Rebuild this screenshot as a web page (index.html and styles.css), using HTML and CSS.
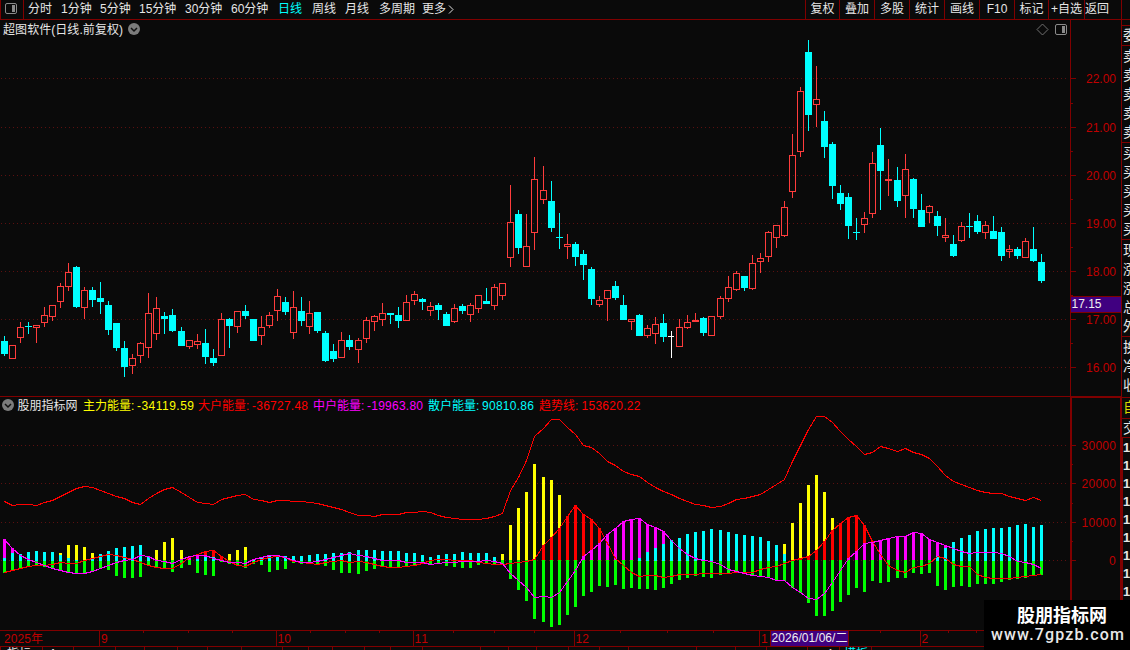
FILE: index.html
```html
<!DOCTYPE html>
<html lang="zh-CN">
<head>
  <meta charset="UTF-8">
  <title>超图软件 日线</title>
  <link rel="stylesheet" href="styles.css">
</head>
<body>
  <div class="terminal">
    <div class="toolbar">
      <div class="layout-btn">
        <svg width="12" height="11" viewBox="0 0 12 11">
          <rect x="0.5" y="0.5" width="11" height="10" rx="1.5" fill="none" stroke="#8a8a8a"/>
          <rect x="7" y="2" width="3" height="7" fill="#8a8a8a"/>
        </svg>
      </div>
      <div class="periods">
        <span>分时</span>
        <span>1分钟</span>
        <span>5分钟</span>
        <span>15分钟</span>
        <span>30分钟</span>
        <span>60分钟</span>
        <span class="active">日线</span>
        <span>周线</span>
        <span>月线</span>
        <span>多周期</span>
        <span class="more">更多
          <svg width="7" height="9" viewBox="0 0 7 9"><path d="M1 0.5L5 4.5L1 8.5" fill="none" stroke="#e0e0e0"/></svg>
        </span>
      </div>
      <div class="tools">
        <span>复权</span>
        <span>叠加</span>
        <span>多股</span>
        <span>统计</span>
        <span>画线</span>
        <span>F10</span>
        <span>标记</span>
        <span class="tight">+自选</span>
        <span>返回</span>
      </div>
    </div>

    <div class="main">
      <div class="charts">
        <svg id="price" class="panel" width="1121" height="376" viewBox="0 20 1121 376"></svg>
        <svg id="energy" class="panel" width="1121" height="234" viewBox="0 396 1121 234"></svg>
        <svg id="dates" class="panel" width="1121" height="20" viewBox="0 630 1121 20"></svg>
      </div>
      <div class="side">
        <div class="group head"><b>委</b></div>
        <div class="group quotes"><b>卖</b><b>卖</b><b>卖</b><b>卖</b><b>卖</b></div>
        <div class="group quotes"><b>买</b><b>买</b><b>买</b><b>买</b><b>买</b></div>
        <div class="group quotes"><b>现</b><b>涨</b><b>涨</b><b>总</b><b>外</b></div>
        <div class="group stats"><b>换</b><b>净</b><b>收</b></div>
        <div class="group own"><b>自</b></div>
        <div class="group deal"><b>交</b></div>
        <div class="ticks"><i>1</i><i>1</i><i>1</i><i>1</i><i>1</i><i>1</i><i>1</i><i>1</i><i>1</i></div>
      </div>
    </div>

    <div class="brand">
      <strong>股朋指标网</strong>
      <svg width="146" height="22"><text x="7" y="15" textLength="133">www.7gpzb.com</text></svg>
    </div>
  </div>
  <script src="chart.js"></script>
</body>
</html>
```

FILE: styles.css
```css
* {
  margin: 0;
  padding: 0;
  box-sizing: border-box;
}

body {
  width: 1130px;
  height: 650px;
  overflow: hidden;
  background: #0a0a0a;
  color: #e6e6e6;
  font: 12px/18px "Liberation Sans", "Noto Sans CJK SC", sans-serif;
}

.terminal {
  position: relative;
  width: 1130px;
  height: 650px;
  overflow: hidden;
  display: flex;
  flex-direction: column;
}

.toolbar {
  height: 20px;
  display: flex;
  border-bottom: 1px solid #800000;
  white-space: nowrap;
}

.layout-btn {
  width: 24px;
  border-left: 1px solid #800000;
  border-right: 1px solid #800000;
  padding: 3px 0 0 4px;
}

.layout-btn svg {
  display: block;
}

.periods {
  width: 781px;
  padding-left: 4px;
  display: grid;
  grid-template-columns: 33px 39px 39px 46px 46px 47px 34px 33px 34px 43px 40px;
}

.periods .active {
  color: #00ffff;
}

.more svg {
  vertical-align: -1px;
  margin-left: -1px;
}

.tools {
  flex: 1;
  display: grid;
  grid-template-columns: 34px 35px 35px 35px 35px 35px 34px 36px 37px 9px;
  text-align: center;
}

.tools span {
  border-left: 1px solid #800000;
}

.tools span:last-child {
  border-right: 1px solid #800000;
  padding-right: 12px;
  width: 38px;
  padding-left: 0;
}

.main {
  flex: 1;
  display: flex;
}

.charts {
  width: 1121px;
  display: flex;
  flex-direction: column;
}

.panel {
  display: block;
  shape-rendering: crispEdges;
}

.panel text {
  font-size: 12px;
}

.axis-label {
  fill: #c00000;
}

.grid-line {
  stroke: #5c1010;
  stroke-dasharray: 1 3;
}

.frame {
  fill: #800000;
}

.smooth {
  shape-rendering: auto;
}

/* narrow strip of the quote window, cut off by the window edge */
.side {
  width: 9px;
  padding-top: 5px;
  overflow: hidden;
  border-left: 1px solid #800000;
}

.group {
  border-top: 1px solid #800000;
  overflow: hidden;
  padding-left: 1px;
}

.group b {
  display: block;
  width: 14px;
  font-weight: 400;
  font-size: 14px;
  height: 19px;
  line-height: 19px;
}

.head {
  height: 20px;
}

.quotes {
  height: 97px;
  padding-top: 1px;
}

.stats {
  height: 61px;
  padding-top: 1px;
}

.own {
  height: 21px;
}

.own b {
  color: #d8d800;
}

.deal {
  height: 20px;
  border-bottom: 1px solid #800000;
}

.ticks {
  border-left: 1px solid #800000;
}

.ticks i {
  display: block;
  height: 18px;
  font: 700 13px/20px "Liberation Sans", sans-serif;
}

.brand {
  position: absolute;
  left: 984px;
  top: 600px;
  width: 146px;
  height: 50px;
  background: #000;
  color: #fff;
}

.brand strong {
  display: block;
  height: 25px;
  padding: 3px 0 0 33px;
  font: 700 18px/22px "Noto Sans CJK SC", sans-serif;
}

.brand svg {
  display: block;
}

.brand text {
  font: 500 16px Roboto, sans-serif;
  fill: #e8e8e8;
}
```

FILE: chart.js
```js
const UP = '#ff3c3c', DOWN = '#00ffff', FLAT = '#ffffff';

// [type, high, body top, body bottom, low]
const candles = [
  ['c',336,341,354,356],['r',345,345,359,359],['r',322,327,338,343],['c',322,326,327,334],['r',325,325,328,343],
  ['r',307,315,323,327],['r',305,305,317,321],['r',283,286,302,308],['r',263,272,287,291],['c',266,267,307,308],
  ['r',287,290,308,319],['c',287,290,300,307],['c',282,298,302,314],['c',301,305,330,335],['c',323,323,348,351],
  ['c',341,348,367,377],['r',354,358,366,374],['r',342,343,356,363],['r',293,313,348,358],['r',297,308,334,340],
  ['c',312,316,319,334],['c',309,315,331,332],['c',327,331,346,346],['r',340,340,347,349],['r',334,341,345,349],
  ['c',329,343,357,364],['c',349,358,363,366],['r',313,319,356,356],['c',318,319,326,348],['r',311,311,327,333],
  ['c',305,311,316,319],['c',319,319,341,341],['r',316,327,336,345],['r',312,315,326,328],['r',289,296,311,321],
  ['c',297,302,312,315],['r',291,307,333,339],['c',297,311,321,326],['r',301,313,327,334],['c',312,312,331,333],
  ['c',331,333,361,362],['c',344,351,359,362],['r',332,340,358,358],['c',335,340,347,350],['r',338,340,350,363],
  ['r',317,320,339,343],['r',315,316,322,331],['r',303,313,320,326],['c',313,313,315,324],['c',307,315,321,328],
  ['r',295,302,321,321],['r',291,294,301,305],['c',298,299,302,310],['r',302,306,311,316],['c',303,305,310,320],
  ['c',312,314,326,326],['r',304,308,322,323],['c',304,306,311,314],['r',303,305,315,322],['r',295,295,309,313],
  ['c',288,301,304,304],['r',284,287,306,310],['r',283,283,296,300],['r',185,222,258,267],['c',210,214,248,254],
  ['r',214,246,267,267],['r',157,179,233,250],['r',166,190,200,204],['c',181,201,228,232],['c',213,237,238,249],
  ['r',234,244,247,259],['c',242,244,257,266],['c',250,254,265,280],['c',267,269,299,305],['r',296,300,305,307],
  ['r',290,290,299,321],['c',281,286,298,300],['c',295,305,320,320],['r',319,319,322,330],['c',314,315,336,336],
  ['r',325,328,336,338],['r',317,324,334,344],['c',314,323,337,342],['w',331,336,337,358],['r',319,327,347,347],
  ['r',315,322,328,329],['r',313,320,322,322],['c',317,318,333,336],['r',316,316,336,336],['r',296,298,317,319],
  ['r',276,287,299,302],['r',271,273,290,291],['c',276,276,288,291],['r',255,263,289,290],['r',253,258,262,273],
  ['r',231,232,257,262],['r',225,225,238,248],['r',201,207,236,237],['r',134,155,192,198],['r',87,91,152,157],
  ['c',40,52,115,131],['r',66,99,105,127],['c',111,121,147,158],['c',142,144,186,199],['c',185,193,204,210],
  ['c',193,197,226,239],['c',218,232,233,240],['r',212,218,225,233],['r',152,163,214,218],['c',128,145,171,210],
  ['r',159,179,181,196],['c',167,180,201,207],['r',154,169,196,218],['c',178,179,209,218],['c',194,210,227,227],
  ['r',205,206,213,223],['c',211,216,226,236],['r',218,235,238,242],['c',235,244,256,257],['r',222,226,241,242],
  ['c',213,226,227,238],['c',215,221,232,234],['r',221,225,233,239],['c',216,231,239,239],['c',227,232,256,261],
  ['r',245,249,252,258],['c',247,249,256,259],['r',238,241,258,258],['c',227,249,261,262],['c',254,262,281,283]
];

const trend = [
  501,505,504,504,505,502,500,496,492,488,486,487,490,493,496,498,502,504,498,493,489,487,492,497,502,503,504,499,497,495,
  494,499,500,502,500,500,501,501,502,503,505,507,509,512,515,515,516,514,514,514,512,512,511,512,515,517,518,519,519,519,
  518,516,513,490,477,460,436,428,419,419,427,434,445,447,453,461,465,471,474,476,482,487,491,494,498,501,504,505,507,506,
  503,499,498,496,494,489,484,479,461,445,429,416,416,422,431,439,446,454,452,446,448,451,448,452,454,458,466,475,481,484,
  487,490,492,493,493,496,498,500,497,500
];

const big = [
  572,570,568,566,565,565,564,562,563,563,560,558,556,554,555,557,559,562,565,567,568,568,563,557,554,551,550,556,561,565,
  566,562,559,557,556,557,561,562,563,564,562,561,560,562,561,562,564,566,567,567,566,565,563,560,559,559,560,560,560,562,
  563,564,564,563,562,561,559,545,537,528,516,505,514,519,528,543,558,565,572,576,575,575,577,576,574,574,574,573,573,573,
  573,572,572,572,569,567,566,563,560,558,556,550,541,530,523,517,515,525,541,554,565,570,572,567,566,563,556,558,564,566,
  566,574,577,578,578,578,577,576,575,574
];

const middle = [
  539,548,555,559,562,565,568,570,572,573,573,571,568,565,562,560,559,555,556,560,561,563,559,556,555,555,558,560,562,562,
  563,559,557,555,555,557,560,562,562,561,559,557,555,553,555,556,558,560,560,560,562,562,562,564,563,562,562,561,561,561,
  560,561,563,573,580,587,597,596,597,592,581,570,556,550,543,534,528,521,519,518,524,527,531,540,548,554,558,560,561,564,
  569,571,573,575,576,577,580,580,587,592,598,599,593,582,570,558,551,543,542,540,538,536,536,532,533,539,542,545,548,551,
  553,552,552,552,553,556,561,562,564,568
];

// bar ends; 0 = no bar
const retail = [
  558,553,554,552,551,552,552,555,558,560,0,558,554,551,548,547,546,545,556,0,0,0,0,0,559,557,557,0,0,0,
  0,559,557,556,557,556,556,556,555,554,554,553,553,552,550,550,550,551,551,551,553,553,555,557,555,554,554,552,553,553,
  553,557,0,0,0,0,0,0,0,0,0,0,0,0,0,0,0,0,0,558,552,548,544,540,538,534,532,531,529,530,
  532,534,535,536,537,541,545,554,0,0,0,0,0,0,0,0,0,0,0,0,0,0,0,0,0,0,556,548,542,538,
  535,531,529,528,528,527,525,524,527,525
];

const negative = [
  573,570,569,566,566,567,568,571,573,574,574,571,568,570,576,578,578,577,566,568,569,572,568,565,573,575,576,562,564,566,
  568,564,565,572,570,569,563,564,564,565,566,570,573,573,574,571,569,567,568,568,567,566,564,565,564,566,567,568,568,565,
  564,565,565,579,590,601,619,622,627,625,615,607,596,592,586,587,585,589,588,589,589,590,588,584,580,578,576,577,578,575,
  574,573,574,576,577,578,581,581,588,593,603,616,616,611,602,595,588,592,581,583,582,578,578,573,574,573,586,590,587,586,
  587,584,584,584,582,580,579,578,576,575
];

const main = {
  7: 553, 8: 545, 9: 545, 10: 547, 11: 553, 19: 550, 20: 542, 21: 538, 22: 550, 28: 554, 29: 550, 30: 547,
  62: 554, 63: 525, 64: 508, 65: 492, 66: 464, 67: 477, 68: 480, 69: 495,
  97: 544, 98: 523, 99: 503, 100: 485, 101: 475, 102: 492, 103: 518
};

const ZERO = 560;
const left = i => Math.floor(1.025 + i * 8.045);
const rect = (x, y, w, h, fill) => `<rect x="${x}" y="${y}" width="${w}" height="${h}" fill="${fill}"/>`;
const frame = (x, y, w, h) => `<rect class="frame" x="${x}" y="${y}" width="${w}" height="${h}"/>`;
const grid = y => `<line class="grid-line" x1="1" x2="1068" y1="${y + 0.5}" y2="${y + 0.5}"/>`;
const text = (x, y, str, fill, width) =>
  `<text x="${x}" y="${y}" fill="${fill}"${width ? ` textLength="${width}"` : ''}>${str}</text>`;
const label = (x, y, str, width) => `<text class="axis-label" x="${x}" y="${y}" textLength="${width}">${str}</text>`;
const chevron = (x, y) =>
  `<g class="smooth"><circle cx="${x}" cy="${y}" r="6" fill="#7c7c7c"/>
   <path d="M${x - 3} ${y - 1}l3 3l3 -3" fill="none" stroke="#111" stroke-width="1.5"/></g>`;

function line(values, color) {
  const pts = values.map((y, i) => `${left(i) + 3.5},${y + 0.5}`).join(' ');
  return `<polyline points="${pts}" fill="none" stroke="${color}"/>`;
}

function drawPrice() {
  let s = '';
  [78, 127, 175, 223, 271, 319, 367].forEach((y, i) => {
    s += grid(y) + frame(1071, y, 5, 1) + label(1086, y + 5, (22 - i) + '.00', 30);
  });
  [54, 103, 151, 199, 247, 295, 343].slice(1).forEach(y => s += frame(1071, y, 2, 1));
  s += frame(1070, 20, 1, 376);

  candles.forEach(([type, high, top, bottom, low], i) => {
    const x = left(i);
    if (type === 'r') {
      if (top > high) s += rect(x + 3, high, 1, top - high, UP);
      if (low > bottom) s += rect(x + 3, bottom, 1, low - bottom, UP);
      s += bottom - top > 2
        ? `<rect x="${x + 0.5}" y="${top + 0.5}" width="6" height="${bottom - top - 1}" fill="none" stroke="${UP}"/>`
        : rect(x, top, 7, bottom - top, UP);
    } else {
      const color = type === 'w' ? FLAT : DOWN;
      s += rect(x + 3, high, 1, low - high, color) + rect(x, top, type === 'w' ? 6 : 7, bottom - top, color);
    }
  });

  s += text(3, 34, '超图软件(日线.前复权)', '#e6e6e6', 120) + chevron(134, 29);
  s += `<path class="smooth" d="M1037 29.5l5.5 -5.5l5.5 5.5l-5.5 5.5z" fill="none" stroke="#707070"/>
        <rect class="smooth" x="1055.5" y="24.5" width="11" height="10" rx="1.5" fill="none" stroke="#8a8a8a"/>`;
  s += rect(1062, 26, 3, 7, '#8a8a8a');
  s += frame(1071, 296, 50, 17) + rect(1071, 297, 50, 15, '#400080') + text(1071.5, 308, '17.15', '#f0f0f0', 30);
  document.getElementById('price').innerHTML = s;
}

function drawEnergy() {
  let s = frame(0, 396, 1070, 1) + frame(1070, 396, 51, 2) + frame(1070, 396, 2, 234) + frame(1120, 396, 1, 234);
  [445, 483, 522, 560].forEach((y, i) => {
    const str = String((3 - i) * 10000).replace(/^0+$/, '0');
    s += grid(y) + frame(1072, y, 4, 1);
    s += i < 3 ? label(1081.5, y + 5, str, 34.5) : label(1109, y + 5, str, 6.7);
  });
  [464, 503, 541].forEach(y => s += frame(1072, y, 1, 1));

  negative.forEach((end, i) => {
    const x = left(i) + 2;
    const bar = (y, color) => y && y < ZERO ? rect(x, y, 3, ZERO - y, color) : '';
    s += bar(main[i], '#ffff00') + bar(big[i], '#ff0000') + bar(middle[i], '#ff00ff');
    s += rect(x, ZERO, 3, end - ZERO, '#00ff00');
    if (retail[i]) s += rect(x, retail[i], 3, ZERO + 1 - retail[i], '#00ffff');
  });
  s += line(trend, '#ff0000') + line(big, '#ff0000') + line(middle, '#ff00ff');

  s += chevron(8, 405);
  s += text(17.5, 410, '股朋指标网', '#e6e6e6', 60);
  [
    [83, '主力能量:', 137, '-34119.59', '#ffff00', 57],
    [198, '大户能量:', 252, '-36727.48', '#ff0000', 56],
    [313, '中户能量:', 367, '-19963.80', '#ff00ff', 56],
    [428, '散户能量:', 482, '90810.86', '#00ffff', 52],
    [539, '趋势线:', 581.5, '153620.22', '#ff0000', 59]
  ].forEach(([x, name, vx, value, color, w]) => {
    s += text(x, 410, name, color) + text(vx, 410, value, color, w);
  });
  document.getElementById('energy').innerHTML = s;
}

function drawDates() {
  let s = frame(0, 630, 1121, 1) + frame(0, 646, 1121, 1);
  [99, 276, 413, 574, 759, 920].forEach(x => s += frame(x, 630, 1, 16));
  [143, 188, 232, 310, 345, 379, 453, 494, 534, 620, 667, 713, 880, 948, 976].forEach(x => s += frame(x, 631, 1, 2));
  [0, 42, 73, 115, 144, 177, 207, 241, 282, 308, 332, 364, 390, 422, 480, 508, 536, 568, 599, 628, 696, 735, 766, 807, 839, 871]
    .forEach(x => s += frame(x, 647, 1, 3));
  s += label(4, 643, '2025年', 39);
  [[101, '9', 6.7], [277.5, '10', 13.5], [414.5, '11', 13.5], [575.5, '12', 13.5], [761, '1', 6.7], [921.5, '2', 6.7]]
    .forEach(([x, str, w]) => s += label(x, 643, str, w));
  s += frame(770, 631, 79, 15) + rect(771, 631, 77, 15, '#400080') + text(771.5, 642, '2026/01/06/二', '#f0f0f0', 76);
  s += text(7, 658, '指标', '#e6e6e6') + text(49, 658, 'A', '#e6e6e6') + text(826, 658, '4', '#e6e6e6') + text(844, 658, '模板', '#00ffff');
  document.getElementById('dates').innerHTML = s;
}

drawPrice();
drawEnergy();
drawDates();
```
